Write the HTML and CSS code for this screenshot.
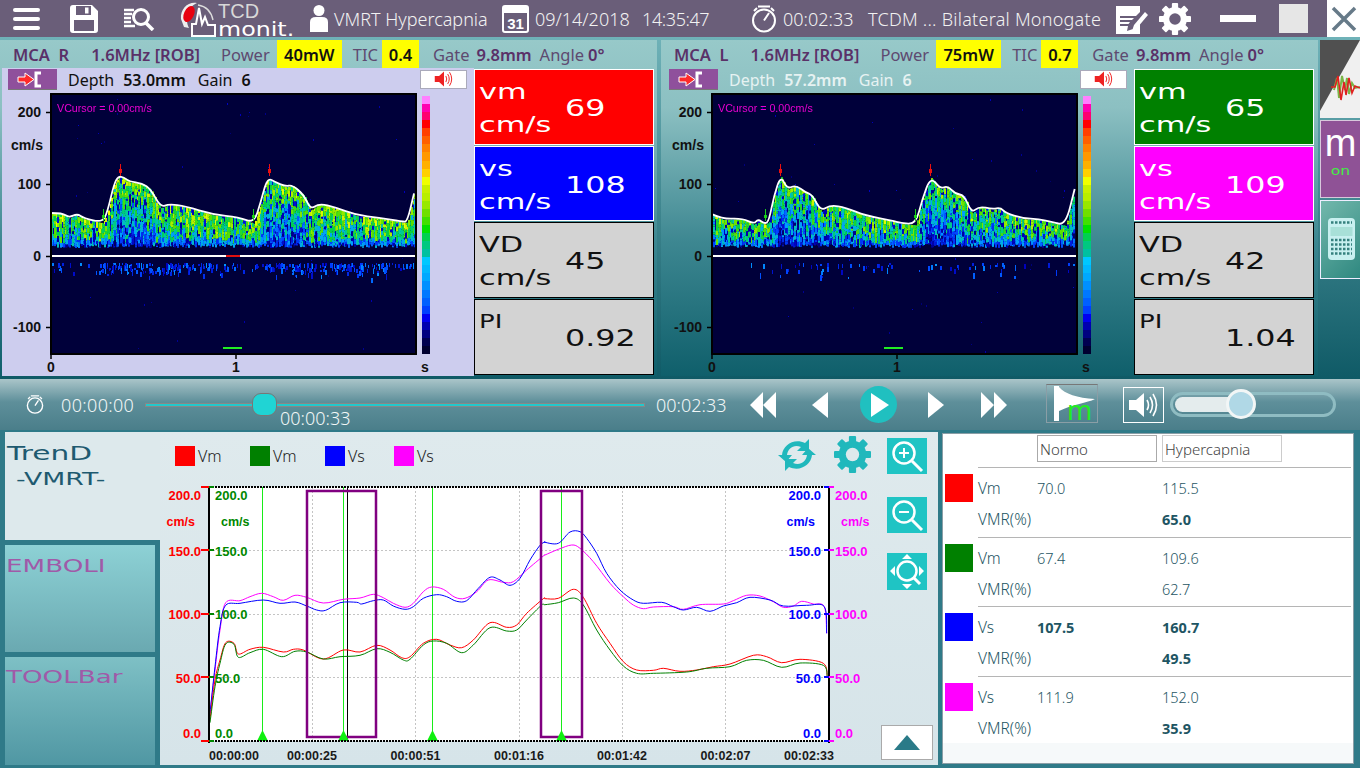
FILE: index.html
```html
<!DOCTYPE html>
<html lang="en">
<head>
<meta charset="utf-8">
<title>TCD Monit</title>
<link rel="stylesheet" href="styles.css">
</head>
<body>
<svg class="defs" width="0" height="0" aria-hidden="true">
  <defs>
    <symbol id="gear" viewBox="-18 -18 36 36">
      <circle r="10" fill="none" stroke="currentColor" stroke-width="7"/>
      <g fill="currentColor">
        <rect x="-3.5" y="-18" width="7" height="36" rx="1"/>
        <rect x="-3.5" y="-18" width="7" height="36" rx="1" transform="rotate(45)"/>
        <rect x="-3.5" y="-18" width="7" height="36" rx="1" transform="rotate(90)"/>
        <rect x="-3.5" y="-18" width="7" height="36" rx="1" transform="rotate(135)"/>
      </g>
      <circle r="6.5" fill="var(--hole)"/>
    </symbol>
    <symbol id="watch" viewBox="0 0 26 28">
      <circle cx="13" cy="15.5" r="11" fill="none" stroke="currentColor" stroke-width="2"/>
      <path d="M7 1.5 L19 1.5 M3 6 L6 3 M23 6 L20 3 M13 15.5 L18 8" fill="none" stroke="currentColor" stroke-width="2"/>
    </symbol>
    <symbol id="spk" viewBox="0 0 32 26">
      <path d="M1 8 H8 L16 1 V25 L8 18 H1 Z" fill="currentColor"/>
      <path d="M19 8 Q22 13 19 18 M22 5 Q27 13 22 21 M25 2 Q32 13 25 24" fill="none" stroke="currentColor" stroke-width="1.6"/>
    </symbol>
  </defs>
</svg>
<div class="app">
  <header class="topbar">
    <svg class="ic ic-menu" viewBox="0 0 27 22"><rect y="0" width="27" height="4" rx="2"/><rect y="9" width="27" height="4" rx="2"/><rect y="18" width="27" height="4" rx="2"/></svg>
    <svg class="ic ic-save" viewBox="0 0 28 28"><path fill-rule="evenodd" d="M3 0 H22 L28 6 V25 Q28 28 25 28 H3 Q0 28 0 25 V3 Q0 0 3 0 Z M6 1 V10 H21 V1 Z M4 15 V26 H24 V15 Z"/><rect x="15" y="2.5" width="3.5" height="6"/></svg>
    <svg class="ic ic-find" viewBox="0 0 32 24"><path d="M1 3 H11 M1 7 H9 M1 11 H8 M1 15 H8 M1 19 H12" stroke="#fff" stroke-width="2.5" fill="none"/><circle cx="18" cy="10" r="7.5" fill="none" stroke="#fff" stroke-width="3"/><path d="M23 16 L30 23" stroke="#fff" stroke-width="3.5"/></svg>
    <div class="logo">
      <svg class="logo-mark" viewBox="0 0 38 37">
        <path d="M3 19 C2 8 11 1 19 3 C14 5 8 11 9 20 C9 24 10 26 11 28 L6 27 Z" fill="#eee"/>
        <ellipse cx="11" cy="14" rx="5" ry="8.5" transform="rotate(25 11 14)" fill="#e8000f"/>
        <path d="M14 36 V24 H18 L21 8 L24 24 L27 17 L30 25 H37 V36 Z" fill="none" stroke="#fff" stroke-width="2"/>
        <path d="M20 5 C27 6 33 11 35 20" fill="none" stroke="#ddd" stroke-width="1.4"/>
      </svg>
      <div class="logo-text"><span class="logo-tcd">TCD</span><span class="logo-monit">monit.</span></div>
    </div>
    <svg class="ic ic-user" viewBox="0 0 18 27"><circle cx="9" cy="5.5" r="5.5"/><path d="M0 27 V17 Q0 12 6 12 H12 Q18 12 18 17 V27 Z"/></svg>
    <span class="tb tb-name">VMRT Hypercapnia</span>
    <svg class="ic ic-cal" viewBox="0 0 27 28"><path d="M3 0 H24 Q27 0 27 3 V25 Q27 28 24 28 H3 Q0 28 0 25 V3 Q0 0 3 0 Z M2 8 V25 Q2 26 3 26 H24 Q25 26 25 25 V8 Z" fill-rule="evenodd"/><text x="13.5" y="24" text-anchor="middle" class="cal-num">31</text></svg>
    <span class="tb tb-date">09/14/2018</span>
    <span class="tb tb-time">14:35:47</span>
    <svg class="ic-watch"><use href="#watch"/></svg>
    <span class="tb tb-dur">00:02:33</span>
    <span class="tb tb-mode">TCDM ... Bilateral Monogate</span>
    <svg class="ic ic-note" viewBox="0 0 32 30"><path fill-rule="evenodd" d="M0 2 H24 V8 L20 12 H4 V14 H18 L16 16 H4 V18 H14 L12.500 20 H4 V22 H12 L11 27 L17 25 L24 18 V30 H0 Z"/><path d="M18 21 L29 8 L32 11 L21 24 L16.500 25.500 Z"/></svg>
    <svg class="ic-gear"><use href="#gear"/></svg>
    <span class="win-min"></span>
    <span class="win-max"></span>
    <span class="win-close"><svg viewBox="0 0 26 26"><path d="M2 2 L24 24 M24 2 L2 24" stroke="#667a88" stroke-width="3.500"/></svg></span>
  </header>

  <main class="monitor">
    <section class="probe probe-left">
      <div class="probe-head">
        <b class="ph-site">MCA&nbsp; R</b>
        <b class="ph-freq">1.6MHz [ROB]</b>
        <span class="ph-lbl ph-power">Power</span>
        <b class="yel yel-mw">40mW</b>
        <span class="ph-lbl ph-tic">TIC</span>
        <b class="yel yel-tic">0.4</b>
        <span class="ph-lbl ph-gate">Gate</span>
        <b class="ph-val">9.8mm</b>
        <span class="ph-lbl ph-angle">Angle</span>
        <b class="ph-val">0°</b>
      </div>
      <div class="probe-body">
        <div class="probe-main">
          <div class="depth-row">
            <span class="arrow-btn"><svg viewBox="0 0 48 21"><path d="M10 8 H17 V4 L26 10.500 L17 17 V13 H10 Z" fill="#ff2a2a" stroke="#fff" stroke-width="1"/><path d="M33 4 H28 V17 H33" fill="none" stroke="#fff" stroke-width="3"/></svg></span>
            <span class="dp-lbl">Depth</span><b class="dp-val">53.0mm</b>
            <span class="dp-lbl dp-gain">Gain</span><b class="dp-val">6</b>
            <span class="spk-btn"><svg><use href="#spk"/></svg></span>
          </div>
          <div class="scope">
            <svg class="scope-axes" viewBox="0 90 474 285" width="474" height="285">
              <path class="tick" d="M46 112.500 H51 M46 184.500 H51 M46 256.500 H51 M46 327.500 H51 M236 355 V359 M51 355 V359"/>
              <text class="sc" x="41" y="117" text-anchor="end">200</text>
              <text class="sc" x="43" y="150" text-anchor="end">cm/s</text>
              <text class="sc" x="41" y="189" text-anchor="end">100</text>
              <text class="sc" x="41" y="261" text-anchor="end">0</text>
              <text class="sc" x="41" y="332" text-anchor="end">-100</text>
              <text class="sc" x="51" y="372" text-anchor="middle">0</text>
              <text class="sc" x="236" y="372" text-anchor="middle">1</text>
              <text class="sc" x="425" y="372" text-anchor="middle">s</text>
            </svg>
            <canvas class="scope-plot" data-side="L" width="367" height="262"></canvas>
            <canvas class="scope-bar" width="8" height="258"></canvas>
            <span class="vcursor">VCursor = 0.00cm/s</span>
          </div>
        </div>
        <div class="metrics">
          <div class="metric m-red"><span class="w-line"><i>vm</i></span><span class="m-val"><i>69</i></span><span class="w-line"><i>cm/s</i></span></div>
          <div class="metric m-blue"><span class="w-line"><i>vs</i></span><span class="m-val"><i>108</i></span><span class="w-line"><i>cm/s</i></span></div>
          <div class="metric m-gray"><span class="w-line"><i>VD</i></span><span class="m-val"><i>45</i></span><span class="w-line"><i>cm/s</i></span></div>
          <div class="metric m-gray m-pi"><span class="w-line"><i>PI</i></span><span class="m-val"><i>0.92</i></span></div>
        </div>
      </div>
    </section>

    <section class="probe probe-right">
      <div class="probe-head">
        <b class="ph-site">MCA&nbsp; L</b>
        <b class="ph-freq">1.6MHz [ROB]</b>
        <span class="ph-lbl ph-power">Power</span>
        <b class="yel yel-mw">75mW</b>
        <span class="ph-lbl ph-tic">TIC</span>
        <b class="yel yel-tic">0.7</b>
        <span class="ph-lbl ph-gate">Gate</span>
        <b class="ph-val">9.8mm</b>
        <span class="ph-lbl ph-angle">Angle</span>
        <b class="ph-val">0°</b>
      </div>
      <div class="probe-body">
        <div class="probe-main">
          <div class="depth-row">
            <span class="arrow-btn"><svg viewBox="0 0 48 21"><path d="M10 8 H17 V4 L26 10.500 L17 17 V13 H10 Z" fill="#ff2a2a" stroke="#fff" stroke-width="1"/><path d="M33 4 H28 V17 H33" fill="none" stroke="#fff" stroke-width="3"/></svg></span>
            <span class="dp-lbl">Depth</span><b class="dp-val">57.2mm</b>
            <span class="dp-lbl dp-gain">Gain</span><b class="dp-val">6</b>
            <span class="spk-btn"><svg><use href="#spk"/></svg></span>
          </div>
          <div class="scope">
            <svg class="scope-axes" viewBox="0 90 474 285" width="474" height="285">
              <path class="tick" d="M46 112.500 H51 M46 184.500 H51 M46 256.500 H51 M46 327.500 H51 M236 355 V359 M51 355 V359"/>
              <text class="sc" x="41" y="117" text-anchor="end">200</text>
              <text class="sc" x="43" y="150" text-anchor="end">cm/s</text>
              <text class="sc" x="41" y="189" text-anchor="end">100</text>
              <text class="sc" x="41" y="261" text-anchor="end">0</text>
              <text class="sc" x="41" y="332" text-anchor="end">-100</text>
              <text class="sc" x="51" y="372" text-anchor="middle">0</text>
              <text class="sc" x="236" y="372" text-anchor="middle">1</text>
              <text class="sc" x="425" y="372" text-anchor="middle">s</text>
            </svg>
            <canvas class="scope-plot" data-side="R" width="367" height="262"></canvas>
            <canvas class="scope-bar" width="8" height="258"></canvas>
            <span class="vcursor">VCursor = 0.00cm/s</span>
          </div>
        </div>
        <div class="metrics">
          <div class="metric m-green"><span class="w-line"><i>vm</i></span><span class="m-val"><i>65</i></span><span class="w-line"><i>cm/s</i></span></div>
          <div class="metric m-mag"><span class="w-line"><i>vs</i></span><span class="m-val"><i>109</i></span><span class="w-line"><i>cm/s</i></span></div>
          <div class="metric m-gray"><span class="w-line"><i>VD</i></span><span class="m-val"><i>42</i></span><span class="w-line"><i>cm/s</i></span></div>
          <div class="metric m-gray m-pi"><span class="w-line"><i>PI</i></span><span class="m-val"><i>1.04</i></span></div>
        </div>
      </div>
    </section>

    <aside class="side-tabs">
      <div class="stab stab-wave">
        <svg viewBox="0 0 40 78"><polygon points="0,0 40,0 0,71" fill="#505050"/>
          <path d="M14 50 L17 38 L19 58 L22 36 L25 50 L27 38 L29 54 L32 43 L35 48 L40 47" fill="none" stroke="#7ab648" stroke-width="2"/>
          <path d="M11 47 L15 47 L18 36 L21 60 L24 42 L26 55 L29 38 L32 53 L35 46 L40 48" fill="none" stroke="#e02020" stroke-width="1.600"/></svg>
      </div>
      <div class="stab stab-m"><span class="stab-mm">m</span><span class="stab-on">on</span></div>
      <div class="stab stab-calc">
        <svg viewBox="0 0 40 78"><rect x="7" y="17" width="27" height="42" rx="4" fill="#c8f0f0"/><rect x="9.500" y="26" width="22" height="9" fill="#a8e0d8"/>
        <path d="M10 21.500 H31 M10 39 H31 M10 43.500 H31 M10 48 H31 M10 52.500 H31" stroke="#35807e" stroke-width="2.500" stroke-dasharray="2.500 1.500" fill="none"/></svg>
      </div>
    </aside>
  </main>

  <div class="controls">
    <svg class="c-watch"><use href="#watch"/></svg>
    <span class="c-time c-t0">00:00:00</span>
    <div class="seek"><span class="seek-thumb"></span><span class="seek-label">00:00:33</span></div>
    <span class="c-time c-t1">00:02:33</span>
    <svg class="tp tp-rw" viewBox="0 0 26 26"><path d="M13 0 V26 L0 13 Z M26 0 V26 L13 13 Z"/></svg>
    <svg class="tp tp-back" viewBox="0 0 16 26"><path d="M16 0 V26 L0 13 Z"/></svg>
    <span class="play"><svg viewBox="0 0 18 24"><path d="M0 0 L18 12 L0 24 Z"/></svg></span>
    <svg class="tp tp-fwd" viewBox="0 0 16 26"><path d="M0 0 V26 L16 13 Z"/></svg>
    <svg class="tp tp-ff" viewBox="0 0 26 26"><path d="M0 0 V26 L13 13 Z M13 0 V26 L26 13 Z"/></svg>
    <span class="flag-btn"><svg viewBox="0 0 50 37"><path d="M7 1 H12 V36 H7 Z M12 2 C18 9 30 13 48 14 C40 18 26 19 12 26 Z" fill="#fff"/><text x="20" y="35" class="flag-m">m</text></svg></span>
    <span class="vol-btn"><svg><use href="#spk"/></svg></span>
    <div class="vol"><span class="vol-fill"></span><span class="vol-thumb"></span></div>
  </div>

  <div class="lower">
    <nav class="modes">
      <div class="mode mode-trend"><span class="wt wt-trend">TrenD</span><span class="wt wt-vmrt">-VMRT-</span></div>
      <div class="mode mode-emb"><span class="wt wt-btn">EMBOLI</span></div>
      <div class="mode mode-tool"><span class="wt wt-btn">TOOLBar</span></div>
    </nav>

    <section class="chart">
      <div class="chart-main">
        <div class="legend">
          <span class="lg"><i class="sq c-r"></i>Vm</span>
          <span class="lg"><i class="sq c-g"></i>Vm</span>
          <span class="lg"><i class="sq c-b"></i>Vs</span>
          <span class="lg"><i class="sq c-m"></i>Vs</span>
          <svg class="refresh" viewBox="0 0 38 34"><path d="M4 17 C5 7 16 0 27 5 L31 1 V13 H19 L23 9 C16 6 10 10 9 17 Z" fill="#20b8bc"/><path d="M34 17 C33 27 22 34 11 29 L7 33 V21 H19 L15 25 C22 28 28 24 29 17 Z" fill="#20b8bc"/><path d="M0 17 L8 24 L14 17 Z M38 17 L30 10 L24 17 Z" fill="#20b8bc"/></svg>
          <svg class="c-gear"><use href="#gear"/></svg>
        </div>
        <svg class="trend" id="trend" viewBox="160 484 721 281" width="721" height="281">
          <rect x="209" y="487" width="620" height="254" fill="#fff"/>
          <path class="grid" d="M209 550.500 H829 M209 614.500 H829 M209 677.500 H829 M312.500 487 V741 M415.500 487 V741 M519.500 487 V741 M622.500 487 V741 M725.500 487 V741"/>
          <path class="vm-l" d="M262.500 487 V741 M343.500 487 V741 M432.500 487 V741 M561.500 487 V741"/>
          <path d="M347.500 487 V741" stroke="#000" stroke-width="1"/>
          <g id="traces"></g>
          <path class="box" d="M307 491 H376 V737 H307 Z M541 491 H582 V737 H541 Z"/>
          <path d="M257 741 L262.500 730 L268 741 Z M338 741 L343.500 730 L349 741 Z M427 741 L432.500 730 L438 741 Z M556 741 L561.500 730 L567 741 Z" fill="#10f010"/>
          <path class="axis-h" d="M209 487 H829 M209 741 H829"/>
          <path class="axis-v" d="M209 487 V743 M829 487 V743"/>
          <path class="t-r" d="M201 487 H209 M201 550 H209 M201 614 H209 M201 677 H209 M201 741 H209"/>
          <path class="t-g" d="M209 487 H214 M209 550 H214 M209 614 H214 M209 677 H214 M209 741 H214"/>
          <path class="t-b" d="M824 487 H829 M824 550 H829 M824 614 H829 M824 677 H829 M824 741 H829"/>
          <path class="t-m" d="M829 487 H834 M829 550 H834 M829 614 H834 M829 677 H834 M829 741 H834"/>
          <g class="yl y-r"><text x="201" y="500">200.0</text><text x="195" y="526">cm/s</text><text x="201" y="556">150.0</text><text x="201" y="619">100.0</text><text x="201" y="683">50.0</text><text x="201" y="738">0.0</text></g>
          <g class="yl y-g"><text x="215" y="500">200.0</text><text x="221" y="526">cm/s</text><text x="215" y="556">150.0</text><text x="215" y="619">100.0</text><text x="215" y="683">50.0</text><text x="215" y="738">0.0</text></g>
          <g class="yl y-b"><text x="821" y="500">200.0</text><text x="815" y="526">cm/s</text><text x="821" y="556">150.0</text><text x="821" y="619">100.0</text><text x="821" y="683">50.0</text><text x="821" y="738">0.0</text></g>
          <g class="yl y-m"><text x="835" y="500">200.0</text><text x="841" y="526">cm/s</text><text x="835" y="556">150.0</text><text x="835" y="619">100.0</text><text x="835" y="683">50.0</text><text x="835" y="738">0.0</text></g>
          <g class="xl"><text x="234" y="760">00:00:00</text><text x="312" y="760">00:00:25</text><text x="415.500" y="760">00:00:51</text><text x="519" y="760">00:01:16</text><text x="622" y="760">00:01:42</text><text x="725.500" y="760">00:02:07</text><text x="809" y="760">00:02:33</text></g>
        </svg>
      </div>
      <div class="chart-side">
        <span class="zbtn"><svg viewBox="0 0 40 36"><circle cx="17" cy="15" r="10.500" fill="none" stroke="#fff" stroke-width="2.500"/><path d="M25 23 L35 33" stroke="#fff" stroke-width="3"/><path d="M12 15 H22 M17 10 V20" stroke="#fff" stroke-width="2"/></svg></span>
        <span class="zbtn z2"><svg viewBox="0 0 40 36"><circle cx="17" cy="15" r="10.500" fill="none" stroke="#fff" stroke-width="2.500"/><path d="M25 23 L35 33" stroke="#fff" stroke-width="3"/><path d="M12 15 H22" stroke="#fff" stroke-width="2"/></svg></span>
        <span class="zbtn z3"><svg viewBox="0 0 40 37"><circle cx="20" cy="18" r="9.500" fill="none" stroke="#fff" stroke-width="2.500"/><path d="M27 25 L33 31" stroke="#fff" stroke-width="3"/><path d="M20 1 L25 6 H15 Z M20 36 L25 31 H15 Z M3 18 L8 13 V23 Z M37 18 L32 13 V23 Z" fill="#fff"/></svg></span>
        <span class="up-btn"><svg viewBox="0 0 26 16"><path d="M13 0 L26 15 H0 Z"/></svg></span>
      </div>
    </section>

    <section class="results">
      <div class="r-head"><span class="r-input">Normo</span><span class="r-input r-input2">Hypercapnia</span></div>
      <div class="r-group">
        <i class="r-sq c-r"></i><span>Vm</span><span>70.0</span><span>115.5</span>
        <span>VMR(%)</span><span></span><b>65.0</b>
      </div>
      <div class="r-group">
        <i class="r-sq c-g"></i><span>Vm</span><span>67.4</span><span>109.6</span>
        <span>VMR(%)</span><span></span><span>62.7</span>
      </div>
      <div class="r-group">
        <i class="r-sq c-b"></i><span>Vs</span><b>107.5</b><b>160.7</b>
        <span>VMR(%)</span><span></span><b>49.5</b>
      </div>
      <div class="r-group">
        <i class="r-sq c-m"></i><span>Vs</span><span>111.9</span><span>152.0</span>
        <span>VMR(%)</span><span></span><b>35.9</b>
      </div>
    </section>
  </div>
</div>
<script src="app.js"></script>
</body>
</html>
```

FILE: styles.css
```css
* { box-sizing: border-box; }
html, body { margin: 0; padding: 0; }
body { width: 1360px; height: 768px; overflow: hidden; font-family: "Noto Sans", "Open Sans", sans-serif; background: #2f7a88; }
i { font-style: normal; }
.defs { position: absolute; }
.app { display: grid; grid-template-rows: 37px 342px 51px 338px; width: 1360px; height: 768px; }

/* top bar */
.topbar { display: flex; align-items: center; background: #6a5e79; color: #f2f2f2; --hole: #6a5e79; }
.ic { fill: #fff; flex: none; display: block; }
.ic-menu { width: 27px; height: 22px; margin-left: 13px; }
.ic-save { width: 28px; height: 28px; margin-left: 30px; }
.ic-find { width: 32px; height: 24px; margin-left: 25px; }
.logo { display: flex; margin-left: 23px; width: 118px; flex: none; height: 37px; }
.logo-mark { width: 38px; height: 37px; flex: none; }
.logo-text { display: flex; flex-direction: column; margin-left: 2px; }
.logo-tcd { font: 20px/20px "Liberation Sans", sans-serif; color: #d8d8d8; margin-top: 1px; }
.logo-monit { font: 19px/15px "DejaVu Sans", sans-serif; color: #fff; display: inline-block; transform: scaleX(1.250); transform-origin: left; margin-top: 1px; }
.ic-user { width: 18px; height: 27px; margin-left: 14px; }
.tb { font-size: 18px; font-weight: 300; white-space: nowrap; flex: none; }
.tb-name { margin-left: 6px; width: 168px; }
.ic-cal { width: 27px; height: 28px; }
.cal-num { font: 700 15px "Liberation Sans", sans-serif; fill: #fff; }
.tb-date { margin-left: 6px; width: 107px; }
.tb-time { width: 109px; letter-spacing: -.4px; }
.ic-watch { width: 26px; height: 28px; flex: none; color: #fff; }
.tb-dur { margin-left: 6px; width: 85px; }
.tb-mode { width: 248px; letter-spacing: .25px; }
.ic-note { width: 32px; height: 30px; }
.ic-gear { width: 32px; height: 32px; margin-left: 11px; flex: none; color: #fff; }
.win-min { width: 36px; height: 7px; background: #fff; margin-left: 29px; flex: none; }
.win-max { width: 29px; height: 29px; background: #e6e6e6; margin-left: 23px; flex: none; }
.win-close { width: 33px; height: 37px; background: #fff; margin-left: 19px; flex: none; display: flex; align-items: center; justify-content: center; }
.win-close svg { width: 26px; height: 26px; }

/* monitor */
.monitor { display: flex; background: linear-gradient(#6fb2b8, #0f5a66); padding-top: 3px; }
.probe { width: 657px; flex: none; height: 336px; display: flex; flex-direction: column; background: linear-gradient(#97c9c9, #8cc0c2 20%, #3d8791 60%, #0f5f6b); }
.probe-right { margin-left: 4px; }
.probe-head { height: 28px; display: flex; align-items: center; font-size: 16.500px; color: #5a3168; padding-left: 13px; white-space: nowrap; }
.probe-head b { font-weight: 600; }
.ph-lbl, .ph-site, .ph-freq, .ph-val { padding-top: 1px; }
.ph-lbl { font-weight: 400; color: #5e4a70; }
.ph-freq { margin-left: 22px; }
.ph-power { margin-left: 21px; }
.yel { background: #ffff00; color: #111; height: 28px; line-height: 29px; text-align: center; font-weight: 600; }
.yel-mw { width: 65px; margin-left: 7px; }
.ph-tic { margin-left: 11px; }
.yel-tic { width: 37px; margin-left: 4px; }
.ph-gate { margin-left: 14px; }
.ph-val { margin-left: 7px; }
.ph-val:last-child { margin-left: 4px; }
.ph-angle { margin-left: 8px; }

.probe-body { display: flex; height: 308px; }
.probe-main { width: 474px; flex: none; display: flex; flex-direction: column; }
.probe-right .probe-main { width: 473px; }
.probe-left .probe-main { background: linear-gradient(#cdcdee, #cdcdee) right / 472px 100% no-repeat; }
.depth-row { height: 22px; display: flex; align-items: center; font-size: 16px; color: #e6f2f2; padding-left: 8px; }
.probe-left .depth-row { color: #111; }
.depth-row b { font-weight: 600; }
.dp-lbl, .dp-val { padding-top: 2px; }
.arrow-btn { width: 49px; height: 21px; background: #8f509c; border-bottom: 1px solid #777; display: flex; flex: none; }
.arrow-btn svg { width: 48px; height: 21px; }
.dp-lbl { margin-left: 11px; }
.dp-val { margin-left: 9px; }
.dp-gain { margin-left: 12px; }
.spk-btn { width: 47px; height: 19px; background: #fff; border: 1px solid #aab; margin-left: auto; margin-right: 7px; display: flex; align-items: center; justify-content: center; color: #ee2222; flex: none; }
.spk-btn svg { width: 22px; height: 16px; }

.scope { position: relative; height: 286px; }
.scope-axes { display: block; }
.tick { stroke: #000; stroke-width: 1.500; fill: none; }
.sc { font: 700 14px "Liberation Sans", Arial, sans-serif; fill: #111; }
.scope-plot { position: absolute; left: 50px; top: 3px; }
.scope-bar { position: absolute; left: 422px; top: 6px; }
.vcursor { position: absolute; left: 57px; top: 12px; font: 10.700px/12px "Liberation Sans", sans-serif; color: #e800d0; }

.metrics { display: flex; flex-direction: column; width: 180px; flex: none; margin-top: 1px; }
.metric { height: 76px; width: 180px; display: grid; grid-template-columns: 90px 1fr; grid-template-rows: 33px 33px; padding-top: 5px; border: 1px solid #fff; color: #fff; }
.metric + .metric { margin-top: 1px; }
.metric:nth-child(2) { height: 75px; }
.metric i { display: inline-block; transform: scaleX(1.380); transform-origin: left center; font: 22px/33px "DejaVu Sans", sans-serif; }
.w-line { padding-left: 4px; white-space: nowrap; }
.m-val { grid-row: 1 / 3; grid-column: 2; align-self: center; white-space: nowrap; }
.m-val i { font-size: 23px; }
.w-line:nth-of-type(3) { grid-column: 1; grid-row: 2; }
.m-red { background: #ff0000; }
.m-blue { background: #0000ff; }
.m-green { background: #008000; }
.m-mag { background: #ff00ff; }
.m-gray { background: #d3d3d3; color: #111; border-color: #000; margin-top: 0; }
.m-pi .w-line i { font-size: 20px; transform: scaleX(1.300); }

/* side tabs */
.side-tabs { margin-left: 2px; width: 40px; display: flex; flex-direction: column; }
.stab { width: 40px; height: 78px; overflow: hidden; flex: none; }
.stab svg { display: block; width: 40px; height: 78px; }
.stab-wave { background: #f0f0f0; }
.stab-m { margin-top: 2px; background: #8f5296; border: 1px solid #d8c8dc; border-right: 0; display: flex; flex-direction: column; align-items: center; color: #fff; overflow: visible; }
.stab-mm { font: 38px/28px "Liberation Sans", sans-serif; margin-top: 8px; display: inline-block; }
.stab-on { font: 12px/12px "DejaVu Sans", sans-serif; color: #44ee44; transform: scaleX(1.300); margin-top: 8px; }
.stab-calc { margin-top: 2px; height: 79px; background: linear-gradient(135deg, #72b8ac, #2f8880); border: 1px solid #eef; border-right: 0; }

/* controls */
.controls { display: flex; align-items: center; background: linear-gradient(#aac5c9, #5e8f9a 45%, #4a7e8a); color: #f2f7f7; --hole: #4a7e8a; }
.c-watch { width: 18px; height: 21px; margin-left: 26px; flex: none; color: #fff; margin-bottom: 1px; }
.c-time { font-size: 18px; font-weight: 300; flex: none; white-space: nowrap; }
.c-t0 { margin-left: 17px; width: 84px; letter-spacing: .35px; }
.seek { width: 500px; height: 4px; background: #22c8cc; border: 1px solid #888; flex: none; position: relative; }
.seek-thumb { position: absolute; left: 106px; top: -11px; width: 25px; height: 23px; border-radius: 9px; background: #20d4d4; border: 1px solid #777; }
.seek-label { position: absolute; left: 134px; top: 4px; font-size: 18px; font-weight: 300; line-height: 20px; }
.c-t1 { margin-left: 11px; width: 94px; }
.tp { fill: #fff; flex: none; height: 26px; }
.tp-rw { width: 26px; }
.tp-back { width: 16px; margin-left: 36px; }
.play { width: 37px; height: 37px; border-radius: 50%; background: #20c0c0; margin-left: 32px; display: flex; align-items: center; justify-content: center; flex: none; }
.play svg { width: 18px; height: 24px; fill: #fff; margin-left: 3px; }
.tp-fwd { width: 16px; margin-left: 31px; }
.tp-ff { width: 26px; margin-left: 37px; }
.flag-btn { width: 52px; height: 39px; margin-left: 39px; border: 1px solid #8a9ea6; border-top-color: #777; display: flex; flex: none; margin-bottom: 2px; }
.flag-btn svg { width: 50px; height: 37px; overflow: visible; }
.flag-m { font: 27px "Noto Sans", sans-serif; fill: #22ee22; }
.vol-btn { width: 41px; height: 36px; margin-left: 25px; border: 1px solid #fff; color: #fff; display: flex; align-items: center; justify-content: center; flex: none; }
.vol-btn svg { width: 32px; height: 26px; }
.vol { width: 166px; height: 25px; margin-left: 6px; border: 3px solid #8fbcc2; border-radius: 13px; position: relative; flex: none; }
.vol-fill { position: absolute; left: 2px; top: 2px; bottom: 2px; width: 66px; background: #e4eced; border-radius: 8px 0 0 8px; }
.vol-thumb { position: absolute; left: 53px; top: -6px; width: 30px; height: 30px; border-radius: 50%; background: #b0d8e6; border: 3px solid #f2f6f6; }

/* lower */
.lower { display: flex; padding-top: 2px; height: 338px; }
.modes { width: 155px; margin-left: 5px; flex: none; display: flex; flex-direction: column; }
.mode { flex: none; display: flex; flex-direction: column; overflow: hidden; }
.mode-trend { height: 108px; background: #dde9ec; padding: 10px 0 0 2px; }
.mode-emb { height: 107px; width: 150px; margin-top: 5px; background: linear-gradient(#8dd1d5, #6aa9b1); padding: 10px 0 0 1px; }
.mode-tool { height: 108px; width: 150px; margin-top: 5px; background: linear-gradient(#7ec0c5, #5097a3); padding: 9px 0 0 1px; }
.wt { display: inline-block; font: 19px/22px "DejaVu Sans", sans-serif; transform: scaleX(1.560); transform-origin: left; white-space: nowrap; align-self: flex-start; }
.wt-trend { color: #1e5a70; }
.wt-vmrt { color: #1e5a70; margin: 4px 0 0 9px; font-size: 17px; transform: scaleX(1.570); }
.wt-btn { color: #a05aa8; font-size: 17px; transform: scaleX(1.540); }

.chart { width: 778px; height: 333px; flex: none; display: flex; background: linear-gradient(#dfeaed, #d6e4e9); --hole: #dde9ec; }
.chart-main { width: 721px; flex: none; }
.legend { height: 52px; display: flex; align-items: flex-start; padding: 14px 0 0 15px; font-size: 16px; font-weight: 300; color: #222; }
.lg { display: flex; align-items: center; height: 20px; width: 75px; gap: 3px; flex: none; }
.lg:nth-child(3) { width: 69px; }
.sq { width: 20px; height: 20px; display: block; }
.c-r { background: #ff0000; }
.c-g { background: #008000; }
.c-b { background: #0000ff; }
.c-m { background: #ff00ff; }
.refresh { width: 38px; height: 34px; margin: -8px 0 0 309px; flex: none; }
.c-gear { width: 37px; height: 37px; margin: -10px 0 0 18px; flex: none; color: #20b8bc; }
.trend { display: block; overflow: visible; }
.grid { stroke: #c4c4c4; stroke-width: 1; stroke-dasharray: 2 2; fill: none; }
.vm-l { stroke: #18ec18; stroke-width: 1; fill: none; }
.box { fill: none; stroke: #800080; stroke-width: 2.500; }
.axis-h { stroke: #000; stroke-width: 2; stroke-dasharray: 2 1; fill: none; }
.axis-v { stroke: #000; stroke-width: 2; fill: none; }
.t-r { stroke: #f00; stroke-width: 2; }
.t-g { stroke: #080; stroke-width: 2; }
.t-b { stroke: #00f; stroke-width: 2; }
.t-m { stroke: #f0f; stroke-width: 2; }
.tr { fill: none; stroke-width: 1; }
.yl text { font: 700 13px "Liberation Sans", sans-serif; }
.y-r { fill: #f00; text-anchor: end; }
.y-g { fill: #080; }
.y-b { fill: #00f; text-anchor: end; }
.y-m { fill: #f0f; }
.y-r text:nth-child(2), .y-g text:nth-child(2), .y-b text:nth-child(2), .y-m text:nth-child(2) { font-size: 12.500px; }
.xl text { font: 700 12.500px "Liberation Sans", sans-serif; fill: #1a1a1a; text-anchor: middle; }
.chart-side { flex: 1; display: flex; flex-direction: column; padding: 6px 0 5px; }
.zbtn { width: 40px; height: 36px; background: #1fc4c4; margin-left: 6px; display: block; flex: none; }
.zbtn svg { display: block; width: 40px; height: 36px; }
.z2 { margin-top: 23px; }
.z3 { margin-top: 20px; height: 37px; }
.z3 svg { height: 37px; }
.up-btn { width: 52px; height: 35px; background: #fff; border: 1px solid #aaa; margin-top: auto; display: flex; align-items: center; justify-content: center; flex: none; }
.up-btn svg { width: 26px; height: 16px; fill: #2a7a88; }

/* results */
.results { width: 412px; height: 331px; margin: 1px 0 0 4px; background: linear-gradient(#fff, #fff 94%, #f6f9fa 94%); border: 1px solid #8a9ea6; flex: none; font-size: 15.500px; font-weight: 300; color: #1e5563; }
.r-head { height: 33px; display: flex; padding: 1px 0 0 94px; }
.r-input { width: 120px; height: 27px; border: 1px solid #aaa; font-size: 15px; line-height: 27px; padding-left: 2px; color: #444; }
.r-input2 { border-color: #ccc; margin-left: 5px; }
.r-group { height: 69.500px; margin-left: 2px; display: grid; grid-template-columns: 33px 59px 125px 1fr; grid-template-rows: 35px 34px; align-items: center; position: relative; }
.r-group b { font-weight: 700; font-size: 14.500px; }
.r-group > :nth-child(-n+4) { padding-top: 7px; }
.r-group > :nth-child(n+3):nth-child(-n+4), .r-group > :nth-child(7) { font-size: 14.500px; }
.r-group > :nth-child(n+2) { white-space: nowrap; }
.r-group::after { content: ""; position: absolute; left: 33px; right: 2px; top: 0; border-top: 1px solid #b5b5b5; }
.r-group:last-child { height: 68px; }
.r-sq { width: 28px; height: 28px; grid-row: 1; display: block; align-self: start; margin-top: 7px; padding: 0; }
.r-group > :nth-child(5) { grid-column: 2; grid-row: 2; }
.r-group > :nth-child(6) { grid-column: 3; grid-row: 2; }
.r-group > :nth-child(7) { grid-column: 4; grid-row: 2; }
```

FILE: app.js
```js
(function () {
  function rng(seed) {
    return function () {
      seed |= 0; seed = seed + 0x6D2B79F5 | 0;
      var t = Math.imul(seed ^ seed >>> 15, 1 | seed);
      t = t + Math.imul(t ^ t >>> 7, 61 | t) ^ t;
      return ((t ^ t >>> 14) >>> 0) / 4294967296;
    };
  }
  var stops = [[0, [0, 0, 58]], [.2, [0, 0, 190]], [.35, [0, 64, 255]], [.45, [0, 160, 255]], [.55, [0, 200, 170]], [.65, [0, 208, 70]], [.75, [90, 224, 0]], [.88, [190, 240, 0]], [1, [240, 255, 0]]];
  function color(t) {
    t = Math.max(0, Math.min(1, t));
    for (var i = 1; i < stops.length; i++) {
      if (t <= stops[i][0]) {
        var a = stops[i - 1], b = stops[i], k = (t - a[0]) / (b[0] - a[0]);
        return 'rgb(' + a[1].map(function (v, j) { return Math.round(v + (b[1][j] - v) * k); }).join(',') + ')';
      }
    }
    return 'rgb(240,255,0)';
  }
  var envelopes = {
    L: { ox: 51, pts: [[156, 372], [190, 372], [210, 386], [235, 374], [255, 388], [310, 400], [325, 370], [345, 285], [358, 262], [375, 265], [390, 277], [430, 283], [455, 300], [485, 355], [510, 345], [560, 352], [640, 376], [720, 385], [765, 402], [785, 340], [805, 266], [830, 280], [860, 292], [880, 288], [915, 318], [935, 362], [960, 343], [1010, 355], [1070, 378], [1140, 386], [1210, 398], [1225, 398], [1245, 313]], zoomX: 0, red: [120.5, 270], green: [104, 254], neg: 430, gain: .02, cursor: true },
    R: { ox: 712, pts: [[160, 376], [190, 390], [250, 388], [285, 405], [297, 390], [318, 405], [330, 395], [345, 320], [365, 260], [385, 300], [410, 288], [440, 310], [460, 318], [485, 366], [515, 348], [560, 356], [620, 380], [700, 395], [725, 402], [770, 406], [790, 330], [815, 263], [845, 300], [865, 290], [890, 315], [915, 318], [938, 372], [960, 352], [1000, 360], [1025, 356], [1040, 372], [1090, 388], [1140, 390], [1180, 400], [1220, 408], [1247, 300]], zoomX: 660, red: [781, 931], green: [766, 916], neg: 90, gain: -.04, cursor: false }
  };
  function drawPlot(cv) {
    var cfg = envelopes[cv.dataset.side], c = cv.getContext('2d'), r = rng(cv.dataset.side === 'L' ? 11 : 29);
    var ox = cfg.ox, oy = 94, W = cv.width, H = cv.height;
    c.fillStyle = '#00003a'; c.fillRect(0, 0, W, H);
    var pts = cfg.pts.map(function (p) { return [cfg.zoomX + p[0] / 3 - ox, 90 + p[1] / 3 - oy]; });
    function envAt(x) {
      for (var i = 1; i < pts.length; i++) {
        if (x <= pts[i][0]) {
          var a = pts[i - 1], b = pts[i];
          return a[1] + (b[1] - a[1]) * (x - a[0]) / (b[0] - a[0] || 1);
        }
      }
      return pts[pts.length - 1][1];
    }
    var x0 = Math.ceil(pts[0][0]), x1 = Math.floor(pts[pts.length - 1][0]);
    for (var x = x0; x <= x1; x += 1.5) {
      var px = Math.round(x);
      var top = envAt(x) + 1, bottom = 155 - r() * 4, colGain = (r() - .5) * .2 + cfg.gain;
      var y = top;
      while (y < bottom) {
        var run = 2 + Math.floor(r() * 5), d = y - top;
        var t = .74 - .52 * Math.min(d, 70) / 70 + colGain + (r() - .5) * .36;
        if (r() < .13) t *= .3;
        if (bottom - y < 8) t = Math.min(t, .44 + (r() - .5) * .24);
        c.fillStyle = color(t);
        c.fillRect(px, y, 2, Math.min(run, bottom - y));
        y += run;
      }
    }
    for (var i = 0; i < cfg.neg; i++) {
      var nx = x0 + r() * (x1 - x0);
      var dense = (nx > 50 && nx < 180) || (nx > 215 && nx < 335);
      if (!dense && r() < .7) continue;
      var ny = 170 + r() * r() * 16;
      c.fillStyle = color(.2 + r() * .24);
      c.fillRect(Math.round(nx), Math.round(ny), 1 + Math.round(r()), 2 + Math.round(r() * 4));
    }
    for (var j = 0; j < 50; j++) {
      c.fillStyle = color(.08 + r() * .14);
      c.fillRect(Math.round(r() * W), Math.round(r() * H), 1, 1 + Math.round(r()));
    }
    c.strokeStyle = '#fff'; c.lineWidth = 1.8; c.lineJoin = 'round';
    c.beginPath();
    c.moveTo(pts[0][0], pts[0][1]);
    for (var n = 1; n < pts.length - 1; n++) {
      c.quadraticCurveTo(pts[n][0], pts[n][1], (pts[n][0] + pts[n + 1][0]) / 2, (pts[n][1] + pts[n + 1][1]) / 2);
    }
    c.lineTo(pts[pts.length - 1][0], pts[pts.length - 1][1]);
    c.stroke();
    c.fillStyle = '#fff'; c.fillRect(1, 162, W - 3, 2);
    if (cfg.cursor) { c.fillStyle = '#e01010'; c.fillRect(176, 162, 14, 2); }
    c.fillStyle = '#22ee22'; c.fillRect(173, 254, 19, 2);
    cfg.red.forEach(function (px) {
      var lx = Math.round(px - ox);
      c.fillStyle = '#e81010'; c.fillRect(lx, 71, 1, 12); c.fillRect(lx - 1, 76, 3, 4);
    });
    cfg.green.forEach(function (px) {
      var lx = Math.round(px - ox);
      c.fillStyle = '#18d018'; c.fillRect(lx, 116, 1, 12); c.fillRect(lx - 1, 122, 3, 3);
    });
    c.strokeStyle = '#000'; c.lineWidth = 2; c.strokeRect(1, 1, W - 2, H - 2);
  }
  var barColors = ['#ff80ff', '#ff00b0', '#ff0070', '#ff0000', '#ff4000', '#ff6000', '#ff8000', '#ff9800', '#ffb000', '#ffd000', '#f0ff00', '#c8f000', '#b8ee00', '#98e800', '#70e000', '#40e000', '#00e000', '#00d050', '#00c880', '#00c0a0', '#00c8ff', '#00b8ff', '#00a8ff', '#0090ff', '#0078ff', '#0060ff', '#0040ff', '#0000f0', '#0000b0', '#000080', '#000050', '#000030'];
  function drawBar(cv) {
    var c = cv.getContext('2d'), h = cv.height / barColors.length;
    barColors.forEach(function (col, i) { c.fillStyle = col; c.fillRect(0, Math.round(i * h), cv.width, Math.ceil(h)); });
  }
  document.querySelectorAll('.scope-plot').forEach(drawPlot);
  document.querySelectorAll('.scope-bar').forEach(drawBar);

  function conv(a, b) {
    return a.map(function (p) { return [160 + p[0] / 3, 480 + p[1] / 3]; })
      .concat(b.map(function (p) { return [540 + p[0] / 3, 480 + p[1] / 3]; }));
  }
  var series = [
    ['#ff00ff', conv([[150, 700], [165, 570], [180, 450], [197, 368], [240, 362], [270, 350], [305, 340], [340, 350], [370, 361], [405, 346], [440, 352], [490, 369], [550, 358], [600, 354], [640, 343], [670, 353], [700, 370], [735, 382], [760, 370], [790, 335], [815, 321], [850, 328], [885, 352], [915, 355], [950, 335], [985, 300], [1030, 307], [1060, 305], [1100, 270], [1150, 228]], [[15, 225], [55, 208], [95, 195], [120, 205], [160, 245], [210, 310], [250, 350], [280, 375], [310, 386], [340, 381], [400, 380], [430, 388], [480, 374], [550, 372], [580, 362], [620, 346], [660, 348], [700, 365], [730, 382], [760, 378], [785, 364], [820, 372], [853, 380], [860, 460]])],
    ['#0000ff', conv([[150, 700], [165, 560], [180, 440], [197, 376], [240, 370], [310, 360], [360, 370], [405, 366], [440, 378], [470, 390], [497, 391], [540, 368], [590, 367], [605, 372], [640, 362], [670, 360], [700, 378], [735, 388], [760, 380], [790, 355], [830, 344], [860, 350], [890, 364], [920, 362], [955, 325], [990, 292], [1020, 300], [1050, 316], [1080, 295], [1110, 240], [1140, 196], [1155, 186]], [[15, 187], [55, 190], [90, 156], [120, 155], [140, 175], [170, 220], [200, 280], [240, 330], [280, 360], [310, 370], [365, 367], [400, 380], [430, 390], [470, 382], [510, 394], [550, 378], [590, 368], [630, 352], [690, 360], [730, 378], [800, 376], [853, 380], [860, 460]])],
    ['#ff0000', conv([[150, 720], [165, 600], [180, 540], [197, 488], [222, 490], [235, 522], [270, 508], [310, 502], [370, 516], [400, 508], [430, 510], [490, 537], [550, 510], [600, 516], [650, 496], [690, 510], [725, 533], [750, 530], [790, 490], [830, 478], [870, 495], [905, 503], [940, 480], [990, 428], [1040, 442], [1070, 435], [1100, 400], [1150, 356]], [[15, 356], [55, 355], [100, 328], [130, 352], [170, 430], [210, 490], [250, 545], [290, 570], [340, 571], [370, 565], [420, 574], [470, 570], [520, 560], [570, 552], [640, 526], [680, 530], [725, 548], [780, 538], [850, 550], [862, 590]])],
    ['#008000', conv([[150, 728], [165, 620], [180, 550], [197, 492], [222, 493], [235, 532], [270, 518], [310, 508], [365, 530], [405, 514], [440, 516], [490, 537], [540, 530], [600, 526], [650, 506], [690, 517], [730, 540], [750, 538], [790, 495], [820, 483], [860, 490], [905, 518], [940, 495], [990, 443], [1040, 453], [1070, 450], [1100, 420], [1145, 375]], [[15, 374], [55, 368], [100, 354], [130, 375], [170, 450], [210, 510], [250, 558], [290, 580], [340, 580], [440, 576], [500, 565], [570, 560], [620, 541], [670, 541], [725, 562], [780, 549], [850, 556], [862, 590]])]
  ];
  var g = document.getElementById('traces'), NS = 'http://www.w3.org/2000/svg';
  series.forEach(function (s) {
    var p = s[1], d = 'M' + p[0][0].toFixed(1) + ' ' + p[0][1].toFixed(1);
    for (var i = 0; i < p.length - 1; i++) {
      var a = p[Math.max(0, i - 1)], b = p[i], e = p[i + 1], f = p[Math.min(p.length - 1, i + 2)], k = 6;
      d += ' C' + (b[0] + (e[0] - a[0]) / k).toFixed(1) + ' ' + (b[1] + (e[1] - a[1]) / k).toFixed(1) + ' ' + (e[0] - (f[0] - b[0]) / k).toFixed(1) + ' ' + (e[1] - (f[1] - b[1]) / k).toFixed(1) + ' ' + e[0].toFixed(1) + ' ' + e[1].toFixed(1);
    }
    var el = document.createElementNS(NS, 'path');
    el.setAttribute('d', d); el.setAttribute('stroke', s[0]); el.setAttribute('class', 'tr');
    g.appendChild(el);
  });
})();
```
